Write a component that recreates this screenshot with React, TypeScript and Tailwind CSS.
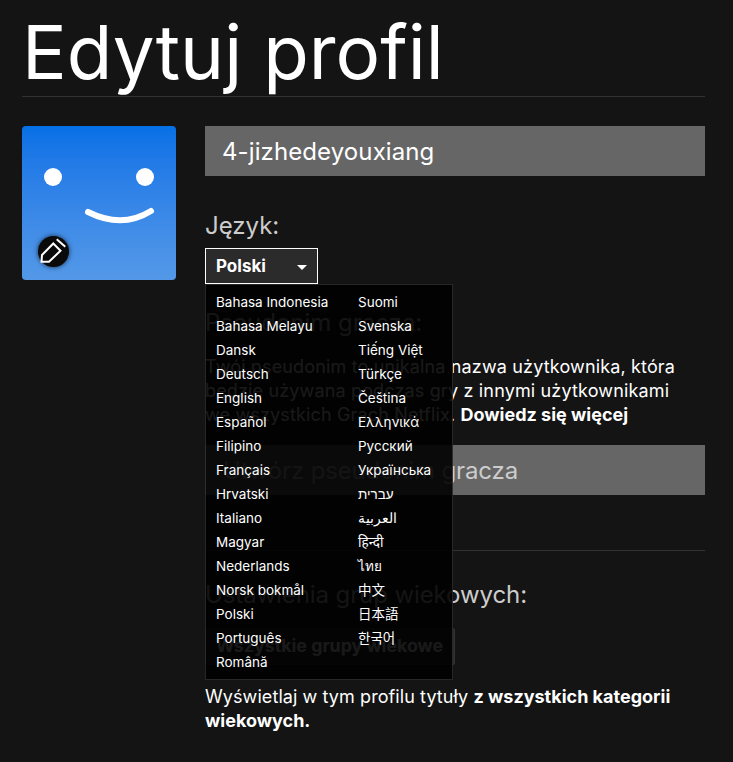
const languages = [
  ['Bahasa Indonesia', 'Suomi'],
  ['Bahasa Melayu', 'Svenska'],
  ['Dansk', 'Tiếng Việt'],
  ['Deutsch', 'Türkçe'],
  ['English', 'Čeština'],
  ['Español', 'Ελληνικά'],
  ['Filipino', 'Русский'],
  ['Français', 'Українська'],
  ['Hrvatski', 'עברית'],
  ['Italiano', 'العربية'],
  ['Magyar', 'हिन्दी'],
  ['Nederlands', 'ไทย'],
  ['Norsk bokmål', '中文'],
  ['Polski', '日本語'],
  ['Português', '한국어'],
  ['Română', ''],
]

const font = "font-['Inter','Noto_Sans','Noto_Sans_CJK_SC',sans-serif]"

const Avatar = () => {
  return (
    <div className="relative h-[154px] w-[154px] shrink-0 overflow-hidden rounded-[4px] bg-gradient-to-b from-[#0570e6] to-[#5499e8]">
      <svg className="h-full w-full" viewBox="0 0 154 154" fill="none">
        <circle cx="31" cy="51" r="9" fill="#fff" />
        <circle cx="123" cy="51" r="9" fill="#fff" />
        <path d="M66 86 Q100 103 129 85" stroke="#fff" strokeWidth="6" strokeLinecap="round" />
      </svg>
      <div className="absolute left-[16px] top-[110px] h-[31px] w-[31px] rounded-full bg-[#0a0a0a] shadow-[0_0_5px_rgba(0,0,0,0.7)]">
        <svg width="31" height="31" viewBox="0 0 31 31" fill="none" stroke="#fff" strokeWidth="2">
          <path d="M3.5 25.8 L4 19 L15.3 7.5 L22.5 14.7 L11 25.8 Z" />
          <path d="M18.7 3.3 L27.3 10.7" />
        </svg>
      </div>
    </div>
  )
}

const App = () => {
  return (
    <div className={`${font} relative h-[762px] overflow-hidden bg-[#141414] pl-[22px] pr-[28px] text-white`}>
      <h1 className="h-[97px] border-b border-[#333] text-[74.5px] font-normal leading-[104px]">
        Edytuj profil
      </h1>

      <div className="mt-[29px] flex gap-[29px]">
        <Avatar />

        <div className="flex-1">
          <div className="flex h-[50px] items-center bg-[#666] pl-[17px] pt-[2px] text-[24px] tracking-[0.1px]">4-jizhedeyouxiang</div>

          <h2 className="mt-[32px] text-[24px] leading-[36px] text-[#ccc]">Język:</h2>

          <div className="relative mt-[4px]">
            <div className="flex h-[36px] w-[113px] items-center justify-between border border-white bg-[#2b2b2b] pl-[10px] pr-[10px] pt-[2px] text-[17px] font-bold">
              Polski
              <span className="h-0 w-0 border-x-[5px] border-t-[5px] border-x-transparent border-t-white" />
            </div>

            {/* Lista języków nad treścią */}
            <div className="absolute left-0 top-[36px] z-10 grid w-[248px] grid-cols-[142px_1fr] border border-[rgba(255,255,255,0.15)] bg-[rgba(0,0,0,0.9)] pb-[5px] pl-[10px] pt-[5px] text-[13.5px]">
              {languages.map(([a, b]) => (
                <div key={a} className="col-span-2 grid h-[24px] grid-cols-subgrid items-center">
                  <span>{a}</span>
                  <span>{b}</span>
                </div>
              ))}
            </div>
          </div>

          <h2 className="mt-[21px] text-[24px] leading-[36px] text-[#ccc]">Pseudonim gracza:</h2>
          <p className="mt-[14px] w-[480px] text-[18px] leading-[24px] tracking-[0.15px]">
            Twój pseudonim to unikalna nazwa użytkownika, która będzie używana podczas gry z innymi użytkownikami we wszystkich Grach Netflix. <b className="tracking-normal">Dowiedz się więcej</b>
          </p>
          <div className="mt-[18px] flex h-[50px] items-center bg-[#666] pl-[18px] pt-[1px] text-[24px] tracking-[-0.15px] text-[#ccc]">Utwórz pseudonim gracza</div>

          <div className="mt-[55px] border-t border-[#333]" />

          <h2 className="mt-[26px] text-[24px] leading-[36px] tracking-[-0.1px] text-[#ccc]">Ustawienia grup wiekowych:</h2>
          <div className="mt-[15px] flex h-[37px] w-[250px] items-center rounded-[2px] border border-[#333] bg-[#2b2b2b] pl-[10px] text-[17.8px] font-bold">Wszystkie grupy wiekowe</div>
          <p className="mt-[20px] text-[18px] leading-[24px] tracking-[0.08px]">
            Wyświetlaj w tym profilu tytuły <b className="tracking-normal">z wszystkich kategorii wiekowych.</b>
          </p>
        </div>
      </div>
    </div>
  )
}

export default App
